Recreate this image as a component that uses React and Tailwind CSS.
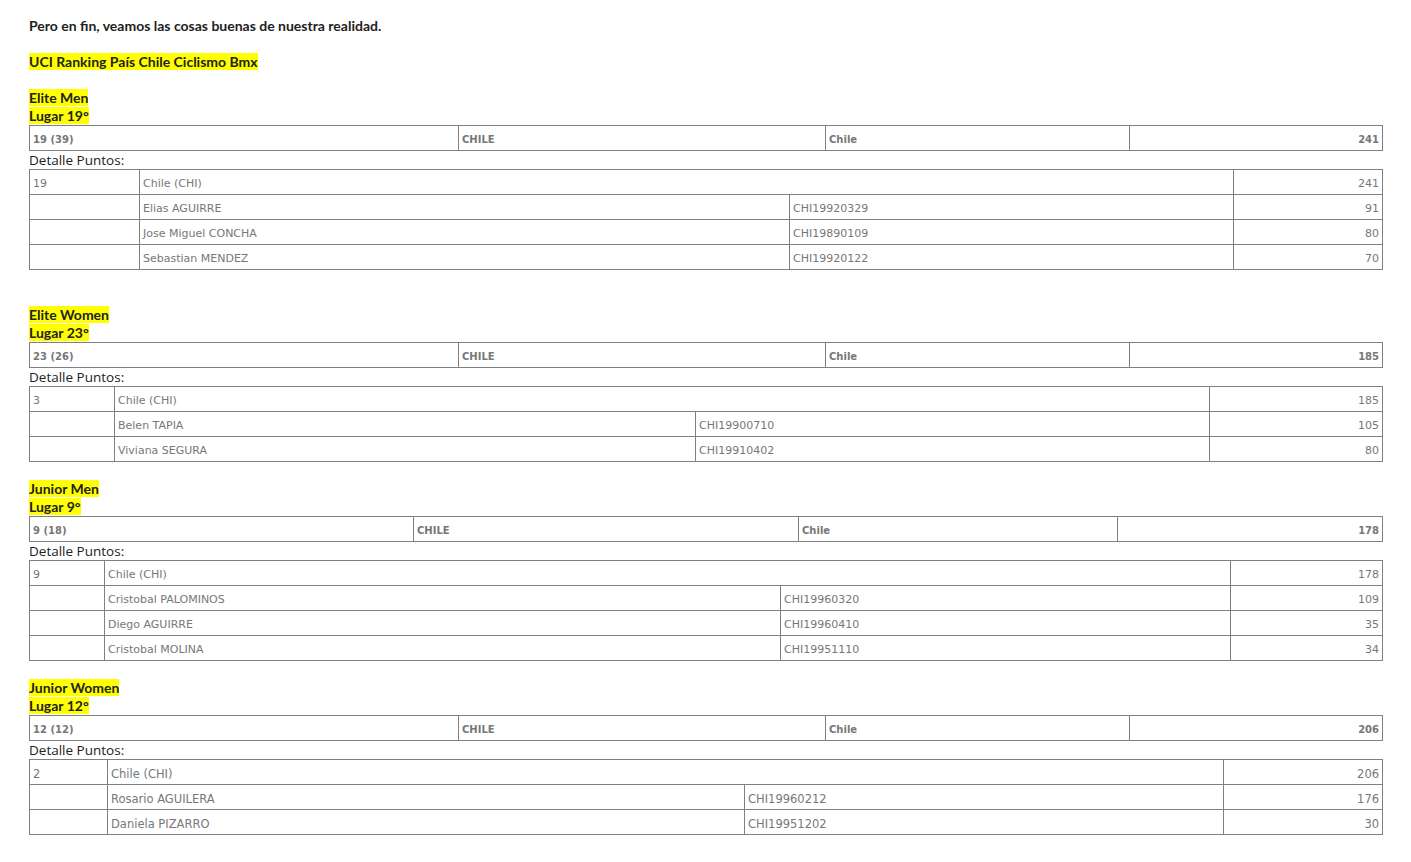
const SECTIONS = [
  {
    title: 'Elite Men',
    lugar: 'Lugar 19°',
    rank: '19 (39)',
    total: '241',
    head: ['w-[429px]', 'w-[367px]', 'w-[304px]', 'w-[253px]'],
    detail: ['w-[110px]', 'w-[650px]', 'w-[444px]', 'w-[149px]'],
    size: 'text-[11px]',
    pos: '19',
    rows: [
      ['Elias AGUIRRE', 'CHI19920329', '91'],
      ['Jose Miguel CONCHA', 'CHI19890109', '80'],
      ['Sebastian MENDEZ', 'CHI19920122', '70'],
    ],
  },
  {
    title: 'Elite Women',
    lugar: 'Lugar 23°',
    rank: '23 (26)',
    total: '185',
    head: ['w-[429px]', 'w-[367px]', 'w-[304px]', 'w-[253px]'],
    detail: ['w-[85px]', 'w-[581px]', 'w-[514px]', 'w-[173px]'],
    size: 'text-[11px]',
    pos: '3',
    rows: [
      ['Belen TAPIA', 'CHI19900710', '105'],
      ['Viviana SEGURA', 'CHI19910402', '80'],
    ],
  },
  {
    title: 'Junior Men',
    lugar: 'Lugar 9°',
    rank: '9 (18)',
    total: '178',
    head: ['w-[384px]', 'w-[385px]', 'w-[319px]', 'w-[265px]'],
    detail: ['w-[75px]', 'w-[676px]', 'w-[450px]', 'w-[152px]'],
    size: 'text-[11px]',
    pos: '9',
    rows: [
      ['Cristobal PALOMINOS', 'CHI19960320', '109'],
      ['Diego AGUIRRE', 'CHI19960410', '35'],
      ['Cristobal MOLINA', 'CHI19951110', '34'],
    ],
  },
  {
    title: 'Junior Women',
    lugar: 'Lugar 12°',
    rank: '12 (12)',
    total: '206',
    head: ['w-[429px]', 'w-[367px]', 'w-[304px]', 'w-[253px]'],
    detail: ['w-[78px]', 'w-[637px]', 'w-[479px]', 'w-[159px]'],
    size: 'text-[11.5px]',
    pos: '2',
    rows: [
      ['Rosario AGUILERA', 'CHI19960212', '176'],
      ['Daniela PIZARRO', 'CHI19951202', '30'],
    ],
  },
]

const cell = 'border border-[#808080] h-[25px] px-[3px] align-middle'
const th = `${cell} pt-[3px]`
const td = `${cell} pt-[5px]`

function Mark({ children }) {
  return <span className="bg-[#ffff00]">{children}</span>
}

function Cols({ widths }) {
  return (
    <colgroup>
      {widths.map((w, i) => <col key={i} className={w} />)}
    </colgroup>
  )
}

function Section({ s }) {
  return (
    <div>
      <div className="leading-[18px]"><Mark>{s.title}</Mark></div>
      <div className="leading-[18px]"><Mark>{s.lugar}</Mark></div>

      <table className="w-[1353px] table-fixed border-collapse font-['DejaVu_Sans',Verdana,sans-serif] text-[10px] font-bold text-[#777]">
        <Cols widths={s.head} />
        <tbody>
          <tr>
            <td className={th}>{s.rank}</td>
            <td className={th}>CHILE</td>
            <td className={th}>Chile</td>
            <td className={`${th} text-right`}>{s.total}</td>
          </tr>
        </tbody>
      </table>

      <div className="font-['Open_Sans',sans-serif] font-normal text-[13.5px] leading-[18px] text-[#222]">Detalle Puntos:</div>

      <table className={`w-[1353px] table-fixed border-collapse font-['DejaVu_Sans',Verdana,sans-serif] ${s.size} font-normal text-[#777]`}>
        <Cols widths={s.detail} />
        <tbody>
          <tr>
            <td className={td}>{s.pos}</td>
            <td className={td} colSpan={2}>Chile (CHI)</td>
            <td className={`${td} text-right`}>{s.total}</td>
          </tr>
          {s.rows.map(r => (
            <tr key={r[1]}>
              <td className={td}></td>
              <td className={td}>{r[0]}</td>
              <td className={td}>{r[1]}</td>
              <td className={`${td} text-right`}>{r[2]}</td>
            </tr>
          ))}
        </tbody>
      </table>
    </div>
  )
}

export default function App() {
  return (
    <div className="min-h-screen bg-white pl-[29px] pt-[17px] font-['Lato',sans-serif] text-[14px] font-bold text-[#222]">
      <p className="leading-[18px]">Pero en fin, veamos las cosas buenas de nuestra realidad.</p>
      <p className="mt-[18px] leading-[18px]"><Mark>UCI Ranking País Chile Ciclismo Bmx</Mark></p>
      <div className="mt-[18px] flex flex-col">
        {SECTIONS.map((s, i) => (
          <div key={s.title} className={i === 0 ? '' : i === 1 ? 'mt-[36px]' : 'mt-[18px]'}>
            <Section s={s} />
          </div>
        ))}
      </div>
    </div>
  )
}
